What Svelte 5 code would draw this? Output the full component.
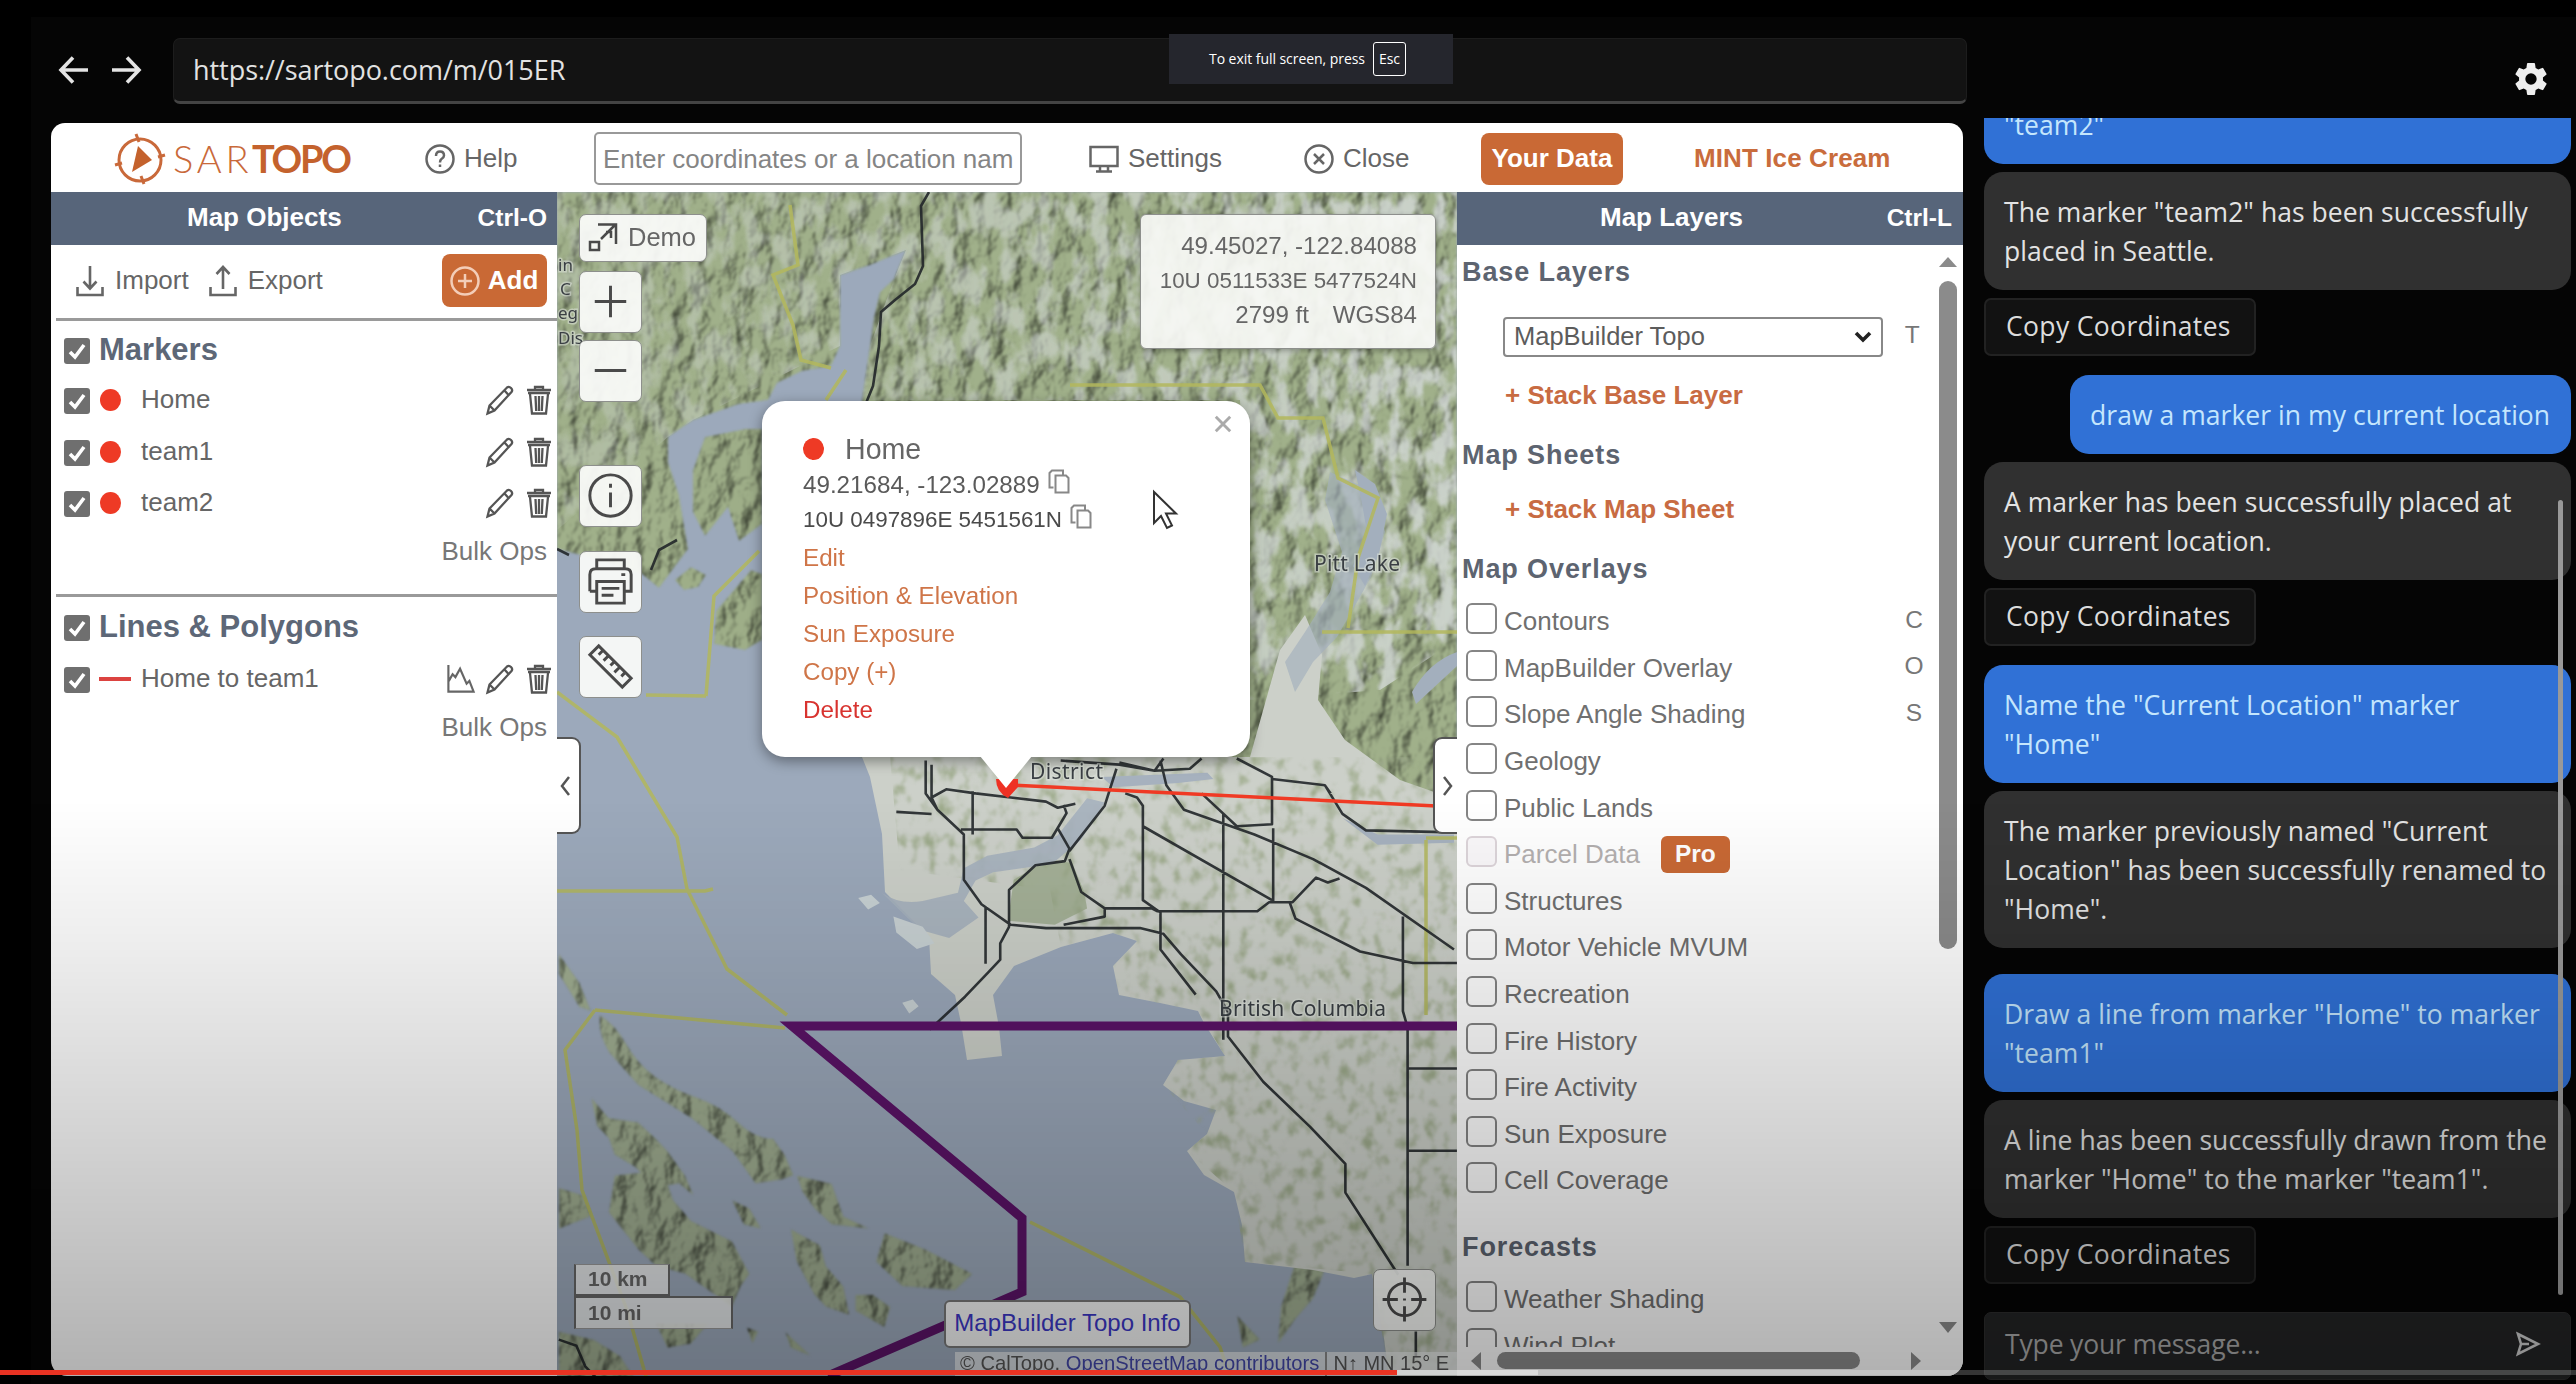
<script>
  const markers = ['Home', 'team1', 'team2'];
  const overlays = [
    { name: 'Contours', key: 'C' },
    { name: 'MapBuilder Overlay', key: 'O' },
    { name: 'Slope Angle Shading', key: 'S' },
    { name: 'Geology' },
    { name: 'Public Lands' },
    { name: 'Parcel Data', pro: true },
    { name: 'Structures' },
    { name: 'Motor Vehicle MVUM' },
    { name: 'Recreation' },
    { name: 'Fire History' },
    { name: 'Fire Activity' },
    { name: 'Sun Exposure' },
    { name: 'Cell Coverage' }
  ];
  const forecasts = [{ name: 'Weather Shading' }, { name: 'Wind Plot' }];
  const messages = [
    { from: 'user', lines: ['"team2"'], first: true },
    { from: 'bot', lines: ['The marker "team2" has been successfully', 'placed in Seattle.'], copy: true },
    { from: 'user', lines: ['draw a marker in my current location'], short: true },
    { from: 'bot', lines: ['A marker has been successfully placed at', 'your current location.'], copy: true },
    { from: 'user', lines: ['Name the "Current Location" marker', '"Home"'] },
    { from: 'bot', lines: ['The marker previously named "Current', 'Location" has been successfully renamed to', '"Home".'], last: true },
    { from: 'user', lines: ['Draw a line from marker "Home" to marker', '"team1"'] },
    { from: 'bot', lines: ['A line has been successfully drawn from the', 'marker "Home" to the marker "team1".'], copy: true }
  ];
</script>

{#snippet check()}
  <svg class="check" viewBox="0 0 26 26"><rect width="26" height="26" rx="3" fill="#6f6f6f" /><path d="M6 14l5 5L20 7" fill="none" stroke="#fff" stroke-width="3.6" /></svg>
{/snippet}
{#snippet pencil()}
  <svg class="ico" viewBox="0 0 28 30"><path d="M1.500 28.500l2-8L21 2.500q2-1.500 4 .5t.5 4L8.500 25.500zM18.500 5.500l4.500 5M3.500 20.500l5 5" /></svg>
{/snippet}
{#snippet trash()}
  <svg class="ico bin" viewBox="0 0 24 30"><path d="M0 5h24M1 8h22M8 4V2h8v2M3 9l2 19.500h14L21 9M8.500 11l.7 15M12 11v15M15.500 11l-.7 15" /></svg>
{/snippet}
{#snippet copyIcon()}
  <svg class="copyico" viewBox="0 0 22 25"><path d="M15 5.500V1.500H4L1.500 4v14.500h4M7.500 6.500H18l2.500 2.500v14.500h-13z" /></svg>
{/snippet}
{#snippet layerRow(o)}
  <div class="layer" class:off={o.pro}>
    <span class="box"></span><span class="lname">{o.name}</span>
    {#if o.pro}<span class="pro">Pro</span>{/if}
    {#if o.key}<span class="key">{o.key}</span>{/if}
  </div>
{/snippet}

<div class="screen">
  <div class="main">
    <div class="nav">
      <svg class="arrow" viewBox="0 0 30 28"><path d="M29 14H2M14 1.500L2 14l12 12.500" /></svg>
      <svg class="arrow" viewBox="0 0 30 28"><path d="M1 14h27M16 1.500L28 14 16 26.500" /></svg>
      <div class="url">https://sartopo.com/m/015ER</div>
    </div>

    <div class="window">
      <header class="top">
        <div class="logo">
          <svg viewBox="0 0 52 52"><g fill="none" stroke="#c9693a" stroke-width="3"><circle cx="26" cy="27" r="21" /><path d="M22 1l3 8M30 51l-3-8M1 32l7-2M51 22l-7 2" /></g><path d="M24 13l14 14-20 12z" fill="#c4622d" /></svg>
          <span class="sar">SAR</span><span class="topo">TOPO</span>
        </div>
        <div class="tool help">
          <svg class="round" viewBox="0 0 30 30"><circle cx="15" cy="15" r="13.500" /><path d="M11 12q0-4.500 4-4.500t4 4q0 2-2.500 3.500-1.500 1-1.500 3.500M15 20.500v2.500" /></svg>Help
        </div>
        <div class="search">Enter coordinates or a location nam</div>
        <div class="tool settings">
          <svg class="round" viewBox="0 0 30 30"><path d="M1.500 3h27v19h-27zM11 22v5M19 22v5M7 27.500h16" /></svg>Settings
        </div>
        <div class="tool close">
          <svg class="round" viewBox="0 0 30 30"><circle cx="15" cy="15" r="13.500" /><path d="M10 10l10 10M20 10L10 20" /></svg>Close
        </div>
        <div class="btn yours">Your Data</div>
        <div class="account">MINT Ice Cream</div>
      </header>

      <div class="body">
        <aside class="left">
          <div class="bar"><span class="title">Map Objects</span><span class="short">Ctrl-O</span></div>
          <div class="actions">
            <svg class="io" viewBox="0 0 28 32"><path d="M14 1v22M7.500 16.500L14 23.500l6.500-7M1.500 22v8h25v-8" /></svg><span>Import</span>
            <svg class="io second" viewBox="0 0 28 32"><path d="M14 24V2M7.500 9L14 2l6.500 7M1.500 22v8h25v-8" /></svg><span>Export</span>
            <div class="btn add"><svg viewBox="0 0 30 30"><circle cx="15" cy="15" r="13.500" /><path d="M8 15h14M15 8v14" /></svg>Add</div>
          </div>
          <section class="group markers">
            <div class="head">{@render check()}<h2>Markers</h2></div>
            {#each markers as m}
              <div class="row">{@render check()}<i class="dot"></i><span class="name">{m}</span>{@render pencil()}{@render trash()}</div>
            {/each}
            <div class="bulk">Bulk Ops</div>
          </section>
          <section class="group shapes">
            <div class="head">{@render check()}<h2>Lines &amp; Polygons</h2></div>
            <div class="row">{@render check()}<i class="dash"></i><span class="name">Home to team1</span>
              <svg class="ico chart" viewBox="0 0 30 30"><path d="M1.500 0v28.500h27L24 17l-3 3-7-16-5 9-3-3-4 7" /></svg>
              {@render pencil()}{@render trash()}</div>
            <div class="bulk">Bulk Ops</div>
          </section>
        </aside>

        <div class="map">
          <svg class="terrain" viewBox="557 192 900 1184">
            <defs>
              <filter id="relief" x="0" y="0" width="100%" height="100%" color-interpolation-filters="sRGB">
                <feTurbulence type="fractalNoise" baseFrequency="0.05 0.032" numOctaves="5" seed="7" result="n" />
                <feDiffuseLighting in="n" surfaceScale="8" diffuseConstant="1.2" lighting-color="#fff" result="l"><feDistantLight azimuth="215" elevation="55" /></feDiffuseLighting>
                <feComposite in="SourceGraphic" in2="l" operator="arithmetic" k1="0.7" k2="0.36" k3="0" k4="0" result="m" />
                <feComposite in="m" in2="SourceGraphic" operator="in" />
                <feGaussianBlur stdDeviation="0.9" />
              </filter>
              <filter id="snow" x="0" y="0" width="100%" height="100%" color-interpolation-filters="sRGB">
                <feTurbulence type="fractalNoise" baseFrequency="0.055 0.03" numOctaves="5" seed="23" />
                <feColorMatrix values="0 0 0 0 .84  0 0 0 0 .86  0 0 0 0 .86  5 0 0 0 -2.2" />
                <feGaussianBlur stdDeviation="1" result="s" />
                <feComposite in="s" in2="SourceGraphic" operator="in" />
              </filter>
              <filter id="woods" x="0" y="0" width="100%" height="100%" color-interpolation-filters="sRGB">
                <feTurbulence type="fractalNoise" baseFrequency="0.08 0.06" numOctaves="5" seed="4" />
                <feColorMatrix values="0 0 0 0 .62  0 0 0 0 .67  0 0 0 0 .55  0 3 0 0 -1.5" />
                <feGaussianBlur stdDeviation="0.8" result="s" />
                <feComposite in="s" in2="SourceGraphic" operator="in" />
              </filter>
              <linearGradient id="fade" x1="0" x2="1"><stop offset="0" stop-color="#fff" stop-opacity=".35" /><stop offset=".45" stop-color="#fff" stop-opacity=".6" /><stop offset="1" stop-color="#fff" /></linearGradient>
            </defs>
            <rect x="557" y="192" width="900" height="1184" fill="#9ca9bb" />
            <g filter="url(#relief)">
              <path fill="#97a682" d="M557 192H1457V900H1260L1200 757H860L862 400 870 346 874 317 880 292 894 279 906 250 870 265 840 275V346L831 366 802 371 777 383 768 400 739 404 693 420 668 437V462L679 495 688 549 659 588 642 574 600 560 557 549z" />
              <path fill="#95a480" d="M762 429H745L705 437 693 470V512L705 536 728 507 739 541 762 524zM762 574L751 570 716 611 714 644 745 650 762 640zM675 580l16-13 15 8-8 12-14 3z" />
              <g transform="translate(550 740) scale(.587 .4107)" fill="#98a58a">
                <path d="M85 670q25 20 45 70t50 80 70 50 70 60 60 40l20 40 15 50-20 10-45 10-20-40-20-40-70-80-90-80-50-80q-20-50-15-90zM70 870l30 50 50 10 30 40 20 30 30 60 15 50-25-30-40 10-35-50-35-30-10-40-20-30zM110 1060l60-10 30 30 10 40 30 50 70 50 30 80-15 30-15 50-80-80-50-20-30-40-50-90zM15 520l35 70 20 70-20-10-35-80zM15 1090l45 20 10 50-55 30zM420 1060l60 20 10 40 10 40 45 30-65-10-30-40-20-40zM570 1200l70 40 80 60-30 40-90-10-45-60zM410 1190l50 40 10 50 30 50 10 70-40-20-20-30-30-80zM520 1350l30 0 30 30-10 50-50-40zM180 1420h90l-30 50-40 10zM15 1440l60 20 45 40 30 68H15zM310 1120l30 20 20 50-30-10zM400 1440l45 60-35-20zM335 1430l20 10-10 30zM1270 1270l50 20-20 70-30 50-30 60 5-90zM1170 1400l40 60-30 20zM1420 1440l125-60v188H1430z" />
              </g>
            </g>
            <path filter="url(#snow)" fill="url(#fade)" d="M557 192H1457V640L1380 690 1250 700 1240 400H862L870 346 894 279 906 250 840 275V346L693 420 668 437 557 530z" opacity=".8" />
            <path fill="#ccd0c9" d="M862 757H1250L1280 650 1305 615 1322 655 1318 700 1345 740 1400 780 1457 800V1376H1389L1383 1331 1372 1274 1354 1278 1313 1270 1245 1262 1242 1225 1234 1192 1204 1175 1187 1151 1207 1134 1216 1110 1184 1101 1163 1085 1178 1060 1225 1056 1204 1023 1198 1011 1160 1003 1119 995 1113 966 1137 941 1113 933 1061 947 1014 966 993 995 999 1027 1002 1056 967 1060 961 1023 955 995 931 974 929 937 885 892 882 834 870 777z" />
            <path filter="url(#woods)" fill="#fff" d="M890 757H1457V1376H1389L1372 1274 1245 1262 1234 1192 1187 1151 1207 1134 1163 1085 1178 1060 1225 1056 1198 1011 1119 995 1113 966 1137 941 1113 933 1061 947 1050 890 900 870z" />
            <g transform="translate(550 740) scale(.587 .4107)">
              <path fill="#98a787" d="M790 340l60-50 40 10 20 70 5 40-55 40-80-10z" opacity=".75" />
              <path fill="#a6b1be" d="M565 372q30 30 70 20l60-20 10-60 40-30 80-20 40-30 50-90 30 10-40 90-50 60-100 20-30 20-20 50 25 40-50 50-50-20z" opacity=".9" />
              <path fill="#a6b1be" d="M940 90l180-10 10 15-60 10-110 10zM1350 190l60 40h130v20l-130 5z" />
              <path fill="#c9d2d4" d="M525 385l22-8 15 20-20 16zM585 430l50 25 20 40-30 14-35-40zM600 640l18-8 10 16-16 18z" />
            </g>
            <path fill="#a3afbd" d="M1325 500l5-28 45 20 10 40-14 45-14 25-20 35-24 25-18 30-10-30 20-30 25-40 12-40z" opacity=".65" />
            <path fill="#a3afbd" d="M1355 470l20 14 12 30-8 40-14 32-12-20 14-34-6-34z" />
            <path fill="#a3afbd" d="M1457 652q-28 10-45 40l4 12 41-38z" />

            <g class="lines yellow">
              <path d="M790 205l8 60-25 10 20 50 8 35 30 8M846 370l-20 30M557 692l60 45 60 100 10 52 40 80 60 46M557 891h148l8-2M595 1010l190 18M595 1010l-30 40 12 80 5 60 45 120 20 70M1030 1222l150 75 40 50 10 30M706 696l-60-1M706 696l8-100 45-45M1070 385h190l18 33h45l15 60 40 20-20 60-10 70M1322 632h135M1426 840v175M1426 838h31" />
            </g>
            <g class="lines road">
              <path d="M929 192l-8 14 2 60-8 18-20 16-14 12-2 34-6 40-9 22" />
              <path d="M557 549l12 6M651 570l8-20 18-10" />
              <g transform="translate(550 740) scale(.587 .4107)">
                <path d="M640 50v80l20 40 30 40 15 20v110l30 60 50 50 60 8h160l40 14 30 50 60 90 20 50v60l60 110 80 110 60 90v70l90 200M650 60v80l10 30M590 175l60 5M650 140l25-20 50 10 60 10 60 10 20 15 30-10M720 125v105M700 218h95l10 20h50l25-60-5-20M865 215l20 50-8 30-50 10-45 60v90l-15 40v40l-20 30-40 60-60 80M742 405v140M885 290l20 80 40 40M885 270l60-110 20-90M980 130l20 10 10 20v230l30 30v90l60 110M1010 210l220 180M945 410h80l10 7h170l20-22h40l40-60 20 12 20-10M1040 50l10 60 30 60 120 60 100 60 90 70 150 150M1110 130l60 80 60-5V90L1170 45M1232 215v180M1147 180v550M870 50l100 10 60 15 15-30M970 55l60 20 60-5 20-25M1230 95l90 15 30 70 40 40 150 5M1260 395l10 40 110 80 90 28h75M1453 430v230l8 40v580M1461 800h84M1461 1000h84M15 1460l30 15 15 50 20 30M1475 1440v60M1320 110l10 20M875 450l70-20v-20" />
              </g>
            </g>
            <g class="border"><path d="M1457 1026H792L1022 1218V1292L828 1376" /></g>
            <path d="M1010 785l447 22" fill="none" stroke="#f03a24" stroke-width="3.500" />
            <path d="M996 779h22v8l-10 11q-12-6-12-19z" fill="#ee3124" />
            <g class="labels">
              <text x="1314" y="571" textLength="86">Pitt Lake</text>
              <text x="1030" y="779" textLength="73">District</text>
              <text x="1219" y="1016" textLength="167">British Columbia</text>
              <g class="small"><text x="558" y="271">in</text><text x="560" y="295">C</text><text x="558" y="319">eg</text><text x="558" y="344">Dis</text></g>
            </g>
          </svg>

          <div class="ctl demo"><svg viewBox="0 0 30 30"><path d="M10 2.500h18V22M13 17L27 3M18 10h5v6M2 20h9v8H2z" /></svg>Demo</div>
          <div class="ctl c1"><svg viewBox="0 0 62 60"><path d="M15 30h32M31 14v32" /></svg></div>
          <div class="ctl c2"><svg viewBox="0 0 62 60"><path d="M15 30h32" /></svg></div>
          <div class="ctl c3"><svg viewBox="0 0 62 60"><circle cx="31" cy="30" r="21" /><path d="M31 27v15M31 18v4" /></svg></div>
          <div class="ctl c4"><svg viewBox="0 0 62 60"><path d="M17 17V8h28v9M10 40V23q0-6 6-6h30q6 0 6 6v17h-7M17 40h-7M17 30h28v22H17zM22 37h18M22 44h12M42 23h4" /></svg></div>
          <div class="ctl c5"><svg viewBox="0 0 62 60"><path d="M19 9l33 33-9 9L10 18zM23 14l-4 4M29 19l-5 5M35 25l-4 4M40 31l-5 5M46 36l-4 4" /></svg></div>
          <div class="ctl c6"><svg viewBox="0 0 62 62"><circle cx="31" cy="31" r="17" /><path d="M31 8v16M31 38v16M8 31h16M38 31h16M31 30v2" /></svg></div>

          <div class="coords"><div>49.45027, -122.84088</div><div class="utm">10U 0511533E 5477524N</div><div>2799 ft <span class="datum">WGS84</span></div></div>

          <div class="handle hl"><svg viewBox="0 0 12 22"><path d="M10 2L3 11l7 9" /></svg></div>
          <div class="handle hr"><svg viewBox="0 0 12 22"><path d="M3 2l7 9-7 9" /></svg></div>

          <div class="popup">
            <svg class="x" viewBox="0 0 20 20"><path d="M2 2l16 16M18 2L2 18" /></svg>
            <div class="ptitle"><i class="dot"></i>Home</div>
            <div class="pc">49.21684, -123.02889 {@render copyIcon()}</div>
            <div class="pc utm">10U 0497896E 5451561N {@render copyIcon()}</div>
            <div class="links">
              <span>Edit</span><span>Position &amp; Elevation</span><span>Sun Exposure</span><span>Copy (+)</span><span class="del">Delete</span>
            </div>
          </div>

          <div class="scale km">10 km</div>
          <div class="scale mi">10 mi</div>
          <div class="info">MapBuilder Topo Info</div>
          <div class="attr"><span>© CalTopo, <u>OpenStreetMap contributors</u></span><span class="north">N↑ MN 15° E</span></div>
          <svg class="cursor" viewBox="0 0 26 40"><path d="M2 2v31l7-7 6 12 5-2.500-6-12h10z" fill="#fff" stroke="#333" stroke-width="2" /></svg>
        </div>

        <aside class="right">
          <div class="bar"><span class="title">Map Layers</span><span class="short">Ctrl-L</span></div>
          <div class="panes">
            <div class="layers">
              <h3 class="h1">Base Layers</h3>
              <div class="selrow"><div class="select">MapBuilder Topo<svg viewBox="0 0 18 12"><path d="M2 2l7 7 7-7" /></svg></div><span class="key">T</span></div>
              <div class="stack">+ Stack Base Layer</div>
              <h3>Map Sheets</h3>
              <div class="stack sheet">+ Stack Map Sheet</div>
              <h3 class="ov">Map Overlays</h3>
              {#each overlays as o}{@render layerRow(o)}{/each}
              <h3 class="fc">Forecasts</h3>
              {#each forecasts as o}{@render layerRow(o)}{/each}
            </div>
            <div class="vbar"><b class="tri up"></b><div class="thumb"></div><b class="tri down"></b></div>
          </div>
          <div class="hbar"><b class="tri lt"></b><div class="hthumb"></div><b class="tri rt"></b></div>
        </aside>
      </div>
    </div>
  </div>

  <div class="chat">
    <div class="chathead">
      <svg viewBox="0 0 24 24"><path fill="#eee" fill-rule="evenodd" d="M19.140 12.940c.040-.3.060-.61.060-.94s-.020-.64-.070-.94l2.030-1.580a.49.49 0 0 0 .12-.61l-1.920-3.320a.49.49 0 0 0-.59-.22l-2.390.96a7 7 0 0 0-1.620-.94l-.36-2.540A.48.480 0 0 0 13.920 2.400h-3.840a.47.470 0 0 0-.47.410l-.36 2.540a7.300 7.300 0 0 0-1.620.94l-2.390-.96a.47.470 0 0 0-.59.220L2.740 8.870a.47.470 0 0 0 .12.610l2.030 1.580a7 7 0 0 0 0 1.880l-2.030 1.580a.49.490 0 0 0-.12.610l1.920 3.320c.12.220.37.290.59.220l2.390-.96c.5.380 1.030.7 1.620.94l.36 2.540c.050.240.240.410.480.410h3.840c.240 0 .440-.17.470-.41l.36-2.540a7 7 0 0 0 1.620-.94l2.390.96c.220.080.470 0 .59-.22l1.920-3.320a.47.470 0 0 0-.12-.61zM12 15.400a3.400 3.400 0 1 1 0-6.800 3.400 3.400 0 0 1 0 6.800z" /></svg>
    </div>
    <div class="thread">
      {#each messages as m}
        <div class="msg {m.from}" class:first={m.first} class:short={m.short} class:last={m.last}>
          {#each m.lines as l}<div>{l}</div>{/each}
        </div>
        {#if m.copy}<div class="copy">Copy Coordinates</div>{/if}
      {/each}
      <div class="scroll"></div>
    </div>
    <div class="compose"><span>Type your message...</span><svg viewBox="0 0 24 24"><path d="M2 2l20 10L2 22l3-10zM5 12h8" /></svg></div>
  </div>

  <div class="toast">To exit full screen, press <span class="esc">Esc</span></div>
  <div class="shade"></div>
  <div class="progress"><div class="played"></div><div class="loaded"></div></div>
</div>

<style>
  :global(body) { margin: 0; background: #000; }
  .screen { position: relative; width: 2576px; height: 1384px; overflow: hidden; background: linear-gradient(#000, #000) 0 0 / 31px 100% no-repeat, linear-gradient(#000, #000) 0 0 / 100% 17px no-repeat, #050505; display: flex; box-sizing: border-box; padding: 17px 0 0 31px; font-family: "Liberation Sans", Arial, sans-serif; font-size: 26px; color: #666; white-space: nowrap; }
  .screen :global(*) { box-sizing: border-box; }
  svg { display: block; flex: none; overflow: visible; }
  .main { width: 1936px; padding: 21px 0 0 20px; flex: none; }
  .nav { display: flex; align-items: center; height: 66px; padding-left: 8px; }
  .arrow { width: 30px; height: 28px; margin-right: 23px; margin-top: -2px; fill: none; stroke: #e4e4e4; stroke-width: 3.6; }
  .arrow + .arrow { margin-right: 32px; margin-left: -1px; }
  .url { width: 1794px; height: 66px; flex: none; padding-left: 19px; background: #131313; border: 1px solid #1d1d1d; border-bottom: 3px solid #444; border-radius: 7px; color: #e2e2e2; font: 27px/61px "Open Sans", sans-serif; letter-spacing: -.05px; }
  .window { margin-top: 19px; width: 1912px; height: 1253px; background: #fff; border-radius: 14px 14px 16px 16px; overflow: hidden; }
  .top { display: flex; align-items: center; height: 69px; padding-top: 2px; }
  .logo { display: flex; align-items: center; width: 347px; padding-left: 63px; color: #c9693a; font: 38px/69px Lato, sans-serif; }
  .logo svg { width: 52px; height: 52px; margin-right: 7px; }
  .sar { font-weight: 300; width: 79px; letter-spacing: 3.8px; }
  .topo { font-weight: 700; letter-spacing: -2.3px; color: #c4622d; }
  .tool { display: flex; align-items: center; gap: 9px; }
  .round { width: 30px; height: 30px; fill: none; stroke: #666; stroke-width: 2.5; }
  .help { width: 196px; padding-left: 27px; }
  .search { width: 428px; height: 53px; border: 2px solid #999; border-radius: 5px; padding-left: 7px; line-height: 50px; color: #858585; overflow: hidden; }
  .settings { width: 230px; padding-left: 67px; }
  .close { width: 229px; padding-left: 52px; }
  .btn { background: #c96935; color: #fff; font-weight: 700; border-radius: 8px; }
  .yours { width: 142px; height: 52px; line-height: 51px; text-align: center; }
  .account { margin-left: 71px; color: #c96c3c; font-weight: 700; letter-spacing: .1px; }
  .body { display: flex; height: 1184px; }
  .left { width: 506px; flex: none; }
  .bar { height: 53px; background: #57657a; color: #fff; font-weight: 700; line-height: 51px; display: flex; justify-content: space-between; padding-left: 136px; padding-right: 10px; }
  .bar .short { font-size: 24.5px; }
  .actions { height: 73px; display: flex; align-items: center; padding-left: 25px; padding-bottom: 2px; }
  .io { width: 28px; height: 32px; fill: none; stroke: #666; stroke-width: 2.6; margin-right: 11px; }
  .io.second { margin-left: 20px; }
  .add { display: flex; align-items: center; gap: 8px; width: 105px; height: 53px; padding-left: 8px; margin-left: 119px; }
  .add svg { width: 30px; height: 30px; fill: none; stroke: #f3cdb8; stroke-width: 2.5; }
  .group { border-top: 3px solid #9a9a9a; margin-left: 5px; padding-left: 8px; }
  .markers { height: 276px; }
  .head { display: flex; align-items: center; height: 60px; }
  .head h2 { margin: -3px 0 0 9px; font-size: 31px; color: #5d6777; }
  .shapes .head { height: 62px; }
  .check { width: 26px; height: 26px; }
  .row { display: flex; align-items: center; height: 51.7px; padding-right: 6px; margin-top: -6px; margin-bottom: 6px; }
  .shapes .row { margin-top: -5px; }
  .dot { width: 21px; height: 22px; border-radius: 50%; background: #ee3a25; flex: none; }
  .row .dot { margin: -2px 20px 0 10px; }
  .dash { width: 32px; height: 4px; background: #dc4340; margin: -2px 10px 0 9px; }
  .name { flex: 1; margin-top: -3px; }
  .ico { width: 28px; height: 30px; fill: none; stroke: #555; stroke-width: 2.3; margin-top: -2px; }
  .bin { width: 24px; margin-left: 13px; }
  .chart { margin-right: 11px; stroke: #666; }
  .bulk { text-align: right; padding-right: 10px; line-height: 38px; color: #777; margin-top: -4px; }
  .map { width: 900px; flex: none; position: relative; overflow: hidden; }
  .terrain { width: 900px; height: 1184px; overflow: hidden; }
  .lines path, .border path { fill: none; vector-effect: non-scaling-stroke; }
  .yellow path { stroke: #b3b85c; stroke-width: 3.5; opacity: .85; }
  .road path { stroke: #22262a; stroke-width: 2.6; stroke-linejoin: round; opacity: .9; }
  .border path { stroke: #5c1468; stroke-width: 9; }
  .labels text { font: 21px "Noto Sans", sans-serif; fill: #3a3f44; stroke: #dfe3dc; stroke-width: 3px; stroke-opacity: .55; paint-order: stroke; }
  .labels .small text { font-size: 17px; }
  .ctl { position: absolute; left: 22px; width: 63px; height: 62px; background: rgba(250,251,249,.94); border: 1.5px solid #8d8f8c; border-radius: 7px; }
  .ctl svg { width: 61px; height: 59px; fill: none; stroke: #4a4a4a; stroke-width: 3; }
  .demo { top: 22px; width: 128px; height: 48px; display: flex; align-items: center; padding-left: 8px; padding-bottom: 2px; gap: 10px; font-size: 25.500px; }
  .demo svg { width: 30px; height: 30px; stroke-width: 2.5; }
  .c1 { top: 79px; } .c2 { top: 148px; } .c3 { top: 273px; } .c4 { top: 359px; } .c5 { top: 444px; }
  .c6 { top: 1077px; left: 816px; }
  .coords { position: absolute; left: 583px; top: 22px; width: 296px; height: 135px; padding: 14px 18px 0 0; text-align: right; background: rgba(247,249,245,.93); border: 1.5px solid #8d8f8c; border-radius: 6px; font-size: 24.100px; line-height: 34.500px; box-shadow: 0 2px 5px #0004; }
  .utm { font-size: 22.2px; }
  .coords .utm { font-size: 22.4px; }
  .datum { margin-left: 17px; }
  .handle { position: absolute; top: 545px; width: 24px; height: 97px; background: #fff; display: flex; align-items: center; border: 2px solid #555; }
  .handle svg { width: 12px; height: 22px; fill: none; stroke: #555; stroke-width: 2.5; margin-left: 2px; }
  .hl { left: 0; border-left: 0; border-radius: 0 9px 9px 0; }
  .hr { right: 0; border-right: 0; border-radius: 9px 0 0 9px; }
  .hr svg { margin-left: 6px; }
  .popup { position: absolute; left: 205px; top: 209px; width: 488px; height: 356px; background: #fff; border-radius: 23px; padding: 29px 0 0 41px; box-shadow: 0 4px 14px #0006; }
  .popup::after { content: ""; position: absolute; left: 218px; bottom: -31px; border: 26px solid transparent; border-top: 32px solid #fff; border-bottom: 0; }
  .ptitle { display: flex; align-items: center; gap: 21px; font-size: 28.600px; height: 38px; }
  .pc { display: flex; align-items: center; gap: 8px; height: 35.500px; font-size: 24.200px; color: #5a5a5a; margin-top: -1px; }
  .pc.utm { font-size: 22.400px; color: #4a4a4a; margin-top: 0; }
  .copyico { width: 22px; height: 25px; fill: none; stroke: #888; stroke-width: 2; margin-top: -7px; }
  .x { position: absolute; right: 18px; top: 14px; width: 18px; height: 18px; stroke: #aaa; stroke-width: 3.2; }
  .links { display: flex; flex-direction: column; font-size: 24.200px; line-height: 37.900px; color: #cf7548; padding-top: 1px; }
  .links .del { color: #d8332f; }
  .scale { position: absolute; left: 17px; background: rgba(240,241,240,.85); border: 2.5px solid #666; border-top: 0; font-size: 21px; font-weight: 700; color: #666; padding-left: 12px; }
  .km { top: 1072px; width: 96px; height: 32px; line-height: 28px; border-top: 1px solid #999; }
  .mi { top: 1104px; width: 159px; height: 33px; line-height: 30px; border-top: 2px solid #666; border-bottom: 1px solid #999; }
  .info { position: absolute; left: 387px; top: 1108px; width: 247px; height: 48px; border: 2px solid #777; border-radius: 6px; background: #f4f5f5; color: #3b37c4; font-size: 24px; line-height: 41px; text-align: center; }
  .attr { position: absolute; left: 398px; top: 1160px; width: 502px; height: 24px; background: rgba(235,238,238,.7); display: flex; font-size: 20.200px; line-height: 22px; padding-left: 5px; color: #555; }
  .attr u { color: #4348a8; }
  .north { margin-left: 6px; padding-left: 6px; border-left: 2px solid #888; font-size: 20px; }
  .cursor { position: absolute; left: 595px; top: 298px; width: 26px; height: 40px; }
  .right { width: 506px; flex: none; background: #fff; }
  .right .bar { padding-left: 143px; padding-right: 11px; }
  .panes { display: flex; height: 1102px; overflow: hidden; }
  .layers { width: 470px; padding-left: 5px; height: 1102px; overflow: hidden; }
  h3 { margin: 0; font-size: 27px; letter-spacing: .9px; color: #5d6470; height: 53px; line-height: 53px; }
  .h1 { height: 60px; line-height: 54px; }
  .selrow { display: flex; align-items: center; padding-left: 41px; height: 63px; }
  .select { display: flex; align-items: center; justify-content: space-between; width: 384px; height: 40px; border: 2px solid #888; border-radius: 4px; padding: 0 9px; font-size: 25.500px; color: #5c5c5c; }
  .select svg { width: 18px; height: 12px; fill: none; stroke: #222; stroke-width: 3.6; }
  .key { font-size: 24.500px; color: #777; width: 30px; text-align: center; }
  .selrow .key { margin-left: 14px; margin-top: -4px; }
  .stack { padding-left: 43px; height: 61px; line-height: 54px; color: #c86b42; font-weight: 700; }
  .sheet { height: 60px; line-height: 54px; }
  .ov { height: 56px; line-height: 55px; }
  .layer { display: flex; align-items: center; height: 46.600px; padding-left: 4px; color: #707070; }
  .box { width: 31px; height: 31px; border: 2.500px solid #858585; border-radius: 6px; margin: -5px 7px 0 0; flex: none; }
  .lname { line-height: 46px; }
  .layer .key { margin-left: auto; margin-right: -2px; margin-top: -3px; }
  .off { color: #b4b0b0; }
  .off .box { border-color: #ddd5da; background: #faf8fa; }
  .pro { margin-left: 21px; width: 69px; height: 37px; border-radius: 6px; background: #c96935; color: #fff; font-weight: 700; font-size: 24.500px; line-height: 35px; text-align: center; }
  .fc { margin-top: 17px; height: 55px; line-height: 53px; }
  .vbar { width: 36px; display: flex; flex-direction: column; align-items: center; padding: 12px 0 14px 6px; }
  .tri { width: 0; height: 0; border: 9px solid transparent; }
  .up { border-bottom: 10px solid #8b8b8b; border-top: 0; }
  .down { border-top: 11px solid #8b8b8b; border-bottom: 0; margin-top: auto; }
  .thumb { margin-top: 14px; width: 18px; height: 668px; border-radius: 9px; background: #8b8b8b; }
  .hbar { display: flex; align-items: center; height: 29px; padding-bottom: 2px; padding-left: 14px; }
  .lt { border-right: 10px solid #8b8b8b; border-left: 0; }
  .rt { border-left: 10px solid #8b8b8b; border-right: 0; margin-left: 51px; }
  .hthumb { margin-left: 16px; width: 363px; height: 17px; border-radius: 9px; background: #8b8b8b; }
  .chat { width: 587px; margin-left: 17px; font: 26.500px/39px "Open Sans", sans-serif; flex: none; }
  .chathead { height: 101px; padding: 42px 0 0 527px; }
  .chathead svg { width: 40px; height: 40px; }
  .thread { height: 1194px; position: relative; overflow: hidden; display: flex; flex-direction: column; align-items: flex-start; }
  .msg { width: 587px; padding: 21px 20px 19px; border-radius: 19px; margin-bottom: 8px; flex: none; letter-spacing: .05px; }
  .user { background: #3071d6; color: #c4e6fd; }
  .bot { background: #303030; color: #e3e3e3; }
  .first { margin-top: -33px; }
  .msg.short { width: 501px; align-self: flex-end; }
  .msg.last { margin-bottom: 26px; }
  .copy { width: 272px; height: 58px; flex: none; margin-bottom: 19px; border: 2px solid #222; border-radius: 7px; background: #121212; color: #dcdcdc; padding-left: 20px; line-height: 53px; letter-spacing: .35px; }
  .scroll { position: absolute; right: 8px; top: 382px; width: 5px; height: 795px; background: #999; border-radius: 3px; }
  .compose { height: 68px; display: flex; align-items: center; justify-content: space-between; padding: 0 30px 4px 20px; background: #232425; border: 1px solid #2d2d2d; border-radius: 7px; color: #a9a9a9; letter-spacing: -.15px; }
  .compose svg { width: 24px; height: 24px; fill: none; stroke: #ccc; stroke-width: 2.600; }
  .toast { position: absolute; left: 1169px; top: 34px; width: 284px; height: 50px; background: #25262d; color: #fff; font: 14px/50px "Open Sans", sans-serif; letter-spacing: -.05px; display: flex; align-items: center; padding-left: 40px; gap: 8px; }
  .esc { width: 33px; height: 34px; border: 1.500px solid #fff; border-radius: 3px; line-height: 31px; text-align: center; }
  .shade { position: absolute; left: 0; right: 0; top: 800px; bottom: 0; background: linear-gradient(rgba(0,0,0,0), rgba(0,0,0,.07) 25%, rgba(0,0,0,.18) 60%, rgba(0,0,0,.31)); }
  .progress { position: absolute; left: 0; right: 0; top: 1370px; height: 5px; background: rgba(255,255,255,.2); display: flex; }
  .played { width: 1397px; background: #e93323; }
  .loaded { width: 141px; background: rgba(255,255,255,.4); }
</style>
